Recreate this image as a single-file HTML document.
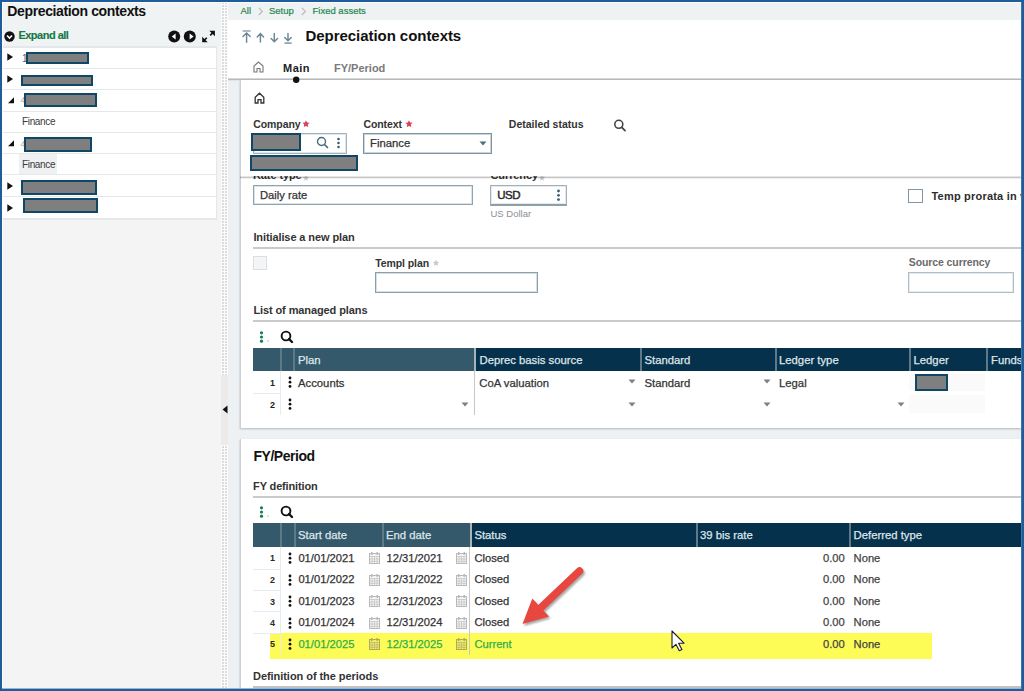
<!DOCTYPE html>
<html><head><meta charset="utf-8"><style>
html,body{margin:0;padding:0;}
body{width:1024px;height:691px;position:relative;overflow:hidden;background:#fff;font-family:"Liberation Sans",sans-serif;}
body>*{position:absolute;}
.t{white-space:nowrap;}
.d{-webkit-text-stroke:0.25px currentColor;}
svg{display:block;}
</style></head><body>
<div style="left:2px;top:2px;width:219px;height:687px;background:#f4f4f4;"></div>
<div style="left:2px;top:2px;width:219px;height:44px;background:#f0f3f4;"></div>
<span class="t" style="left:7.3px;top:4.25px;font-size:14px;line-height:14px;color:#111;font-weight:bold;letter-spacing:-0.37px;">Depreciation contexts</span>
<svg style="left:4px;top:31px" width="11" height="11" viewBox="0 0 11 11"><circle cx="5.5" cy="5.5" r="5.2" fill="#111"/><path d="M3 4.5 L5.5 7 L8 4.5" stroke="#fff" stroke-width="1.6" fill="none"/></svg>
<span class="t" style="left:18.4px;top:29.69px;font-size:11px;line-height:11px;color:#157a45;font-weight:bold;letter-spacing:-0.5px;-webkit-text-stroke:0.15px #157a45;">Expand all</span>
<svg style="left:160px;top:26px" width="60" height="20" viewBox="160 26 60 20"><circle cx="174.2" cy="36.6" r="6" fill="#111"/><path d="M171.8 36.6 L175.6 33.6 V39.6Z" fill="#fff"/><circle cx="189.8" cy="36.6" r="6" fill="#111"/><path d="M193.6 36.6 L189.6 33.6 V39.6Z" fill="#fff"/><path d="M209.3 30.7 H214.9 V36.3Z M202.2 36.8 V42.3 H207.7Z" fill="#111"/><path d="M213 32.6 L210.2 35.4 M203.9 40.6 L206.8 37.7" stroke="#111" stroke-width="1.6"/></svg>
<div style="left:2px;top:46px;width:215px;height:172px;background:#fff;border-right:1px solid #e3e7ea;box-sizing:border-box;"></div>
<div style="left:2px;top:46px;width:215px;height:2px;background:#e4e8eb;"></div>
<div style="left:2px;top:68px;width:215px;height:1px;background:#e4e8eb;"></div>
<div style="left:2px;top:89px;width:215px;height:1px;background:#e4e8eb;"></div>
<div style="left:2px;top:111px;width:215px;height:1px;background:#e4e8eb;"></div>
<div style="left:2px;top:132px;width:215px;height:1px;background:#e4e8eb;"></div>
<div style="left:2px;top:153px;width:215px;height:1px;background:#e4e8eb;"></div>
<div style="left:2px;top:174px;width:215px;height:1px;background:#e4e8eb;"></div>
<div style="left:2px;top:196px;width:215px;height:1px;background:#e4e8eb;"></div>
<div style="left:2px;top:218px;width:215px;height:2px;background:#e4e8eb;"></div>
<div style="left:19px;top:154px;width:38px;height:20px;background:#eef0f1;"></div>
<svg style="left:7.2px;top:53.2px" width="7" height="8" viewBox="0 0 7 8"><path d="M0.3 0.3 L6 4 L0.3 7.7Z" fill="#111"/></svg>
<svg style="left:7.2px;top:74.8px" width="7" height="8" viewBox="0 0 7 8"><path d="M0.3 0.3 L6 4 L0.3 7.7Z" fill="#111"/></svg>
<svg style="left:7.5px;top:97px" width="7" height="7" viewBox="0 0 7 7"><path d="M6 0.3 L6 6.3 L0 6.3Z" fill="#111"/></svg>
<svg style="left:7.5px;top:140.3px" width="7" height="7" viewBox="0 0 7 7"><path d="M6 0.3 L6 6.3 L0 6.3Z" fill="#111"/></svg>
<svg style="left:7.2px;top:182px" width="7" height="8" viewBox="0 0 7 8"><path d="M0.3 0.3 L6 4 L0.3 7.7Z" fill="#111"/></svg>
<svg style="left:7.2px;top:203.5px" width="7" height="8" viewBox="0 0 7 8"><path d="M0.3 0.3 L6 4 L0.3 7.7Z" fill="#111"/></svg>
<span class="t" style="left:22px;top:54.03px;font-size:10px;line-height:10px;color:#6a5a7a;">1</span>
<div style="left:26px;top:52px;width:63px;height:12px;background:#7f7f7f;border:2px solid #0e4866;box-sizing:border-box;"></div>
<div style="left:21px;top:75px;width:72px;height:11px;background:#7f7f7f;border:2px solid #0e4866;box-sizing:border-box;"></div>
<span class="t" style="left:20.5px;top:96.38px;font-size:9px;line-height:9px;color:#aaa;">4</span>
<div style="left:24px;top:93px;width:73px;height:14px;background:#7f7f7f;border:2px solid #0e4866;box-sizing:border-box;"></div>
<span class="t" style="left:22px;top:116.83px;font-size:10px;line-height:10px;color:#3a3a3a;letter-spacing:-0.35px;">Finance</span>
<span class="t" style="left:20.5px;top:139.88px;font-size:9px;line-height:9px;color:#aaa;">4</span>
<div style="left:24px;top:137px;width:68px;height:15px;background:#7f7f7f;border:2px solid #0e4866;box-sizing:border-box;"></div>
<span class="t" style="left:22px;top:159.53px;font-size:10px;line-height:10px;color:#3a3a3a;letter-spacing:-0.35px;">Finance</span>
<div style="left:21px;top:180px;width:76px;height:15px;background:#7f7f7f;border:2px solid #0e4866;box-sizing:border-box;"></div>
<div style="left:23px;top:198px;width:75px;height:15px;background:#7f7f7f;border:2px solid #0e4866;box-sizing:border-box;"></div>
<div style="left:221px;top:2px;width:7px;height:687px;background:#fcfcfc;"></div>
<div style="left:222px;top:2px;width:2px;height:687px;background:repeating-linear-gradient(to bottom,#dbdbdb 0,#dbdbdb 2px,#fcfcfc 2px,#fcfcfc 3px);"></div>
<div style="left:225px;top:2px;width:2px;height:687px;background:repeating-linear-gradient(to bottom,#dedede 0,#dedede 2px,#fcfcfc 2px,#fcfcfc 3px);"></div>
<div style="left:221px;top:375px;width:7px;height:70px;background:#ecebea;"></div>
<svg style="left:222px;top:405px" width="6" height="9" viewBox="0 0 6 9"><path d="M5.5 0.5 L0.5 4.5 L5.5 8.5Z" fill="#111"/></svg>
<div style="left:228px;top:2px;width:794px;height:687px;background:#eef1f3;"></div>
<div style="left:228px;top:2px;width:794px;height:18px;background:#eff2f3;"></div>
<span class="t" style="left:240.5px;top:6.46px;font-size:9.5px;line-height:9.5px;color:#1f8752;-webkit-text-stroke:0.2px #1f8752;">All</span>
<svg style="left:257.5px;top:6.5px" width="6" height="9" viewBox="0 0 6 9"><path d="M0.8 0.8 L4.3 4.4 L0.8 8" stroke="#b9b9bf" fill="none" stroke-width="1.2"/></svg>
<span class="t" style="left:269px;top:6.46px;font-size:9.5px;line-height:9.5px;color:#1f8752;-webkit-text-stroke:0.2px #1f8752;">Setup</span>
<svg style="left:300.8px;top:6.5px" width="6" height="9" viewBox="0 0 6 9"><path d="M0.8 0.8 L4.3 4.4 L0.8 8" stroke="#b9b9bf" fill="none" stroke-width="1.2"/></svg>
<span class="t" style="left:312.5px;top:6.46px;font-size:9.5px;line-height:9.5px;color:#1f8752;-webkit-text-stroke:0.2px #1f8752;">Fixed assets</span>
<div style="left:228px;top:20px;width:794px;height:59px;background:#fff;"></div>
<div style="left:228px;top:78px;width:794px;height:1px;background:#d6d7d8;"></div>
<div style="left:228px;top:79px;width:794px;height:1px;background:#b9babb;"></div>
<div style="left:228px;top:80px;width:794px;height:1px;background:#e2e3e4;"></div>
<svg style="left:236px;top:24px" width="64" height="24" viewBox="236 24 64 24" stroke="#6a8796" stroke-width="1.45" fill="none" stroke-linecap="round"><path d="M243.2 31 H250" stroke-width="1.6" stroke="#8ea6b1"/><path d="M246.6 33.3 V42.2 M243 36.6 L246.6 33 L250.2 36.6"/><path d="M260.4 33.6 V42 M257.2 36.9 L260.4 33.6 L263.6 36.9"/><path d="M274.3 33.4 V41.8 M271.1 38.5 L274.3 41.8 L277.5 38.5"/><path d="M288 33.4 V40.8 M284.8 37.6 L288 40.8 L291.2 37.6"/><path d="M285 43.1 H291.1" stroke-width="1.6" stroke="#8ea6b1"/></svg>
<span class="t" style="left:305.5px;top:28.30px;font-size:15px;line-height:15px;color:#111;font-weight:bold;letter-spacing:-0.05px;">Depreciation contexts</span>
<svg style="left:252.5px;top:61px" width="11" height="12" viewBox="0 0 11 12"><path d="M1 11 V5 L5.5 1 L10 5 V11 H7 V7.5 H4 V11Z" stroke="#777" stroke-width="1.1" fill="none"/></svg>
<span class="t" style="left:283px;top:62.69px;font-size:11px;line-height:11px;color:#222;font-weight:bold;letter-spacing:0.5px;">Main</span>
<span class="t" style="left:334px;top:62.69px;font-size:11px;line-height:11px;color:#7a7a7a;font-weight:bold;">FY/Period</span>
<div style="left:240px;top:80px;width:782px;height:348px;background:#fff;border-left:1px solid #cdd0d2;box-sizing:border-box;box-shadow:0 1px 2px rgba(0,0,0,0.25);"></div>
<span class="t" style="left:253px;top:170.09px;font-size:11px;line-height:11px;color:#333;font-weight:bold;letter-spacing:-0.1px;">Rate type</span>
<svg style="left:301px;top:172.5px" width="10" height="10" viewBox="301 172.5 10 10"><polygon points="306.00,174.20 306.97,176.17 309.14,176.48 307.57,178.01 307.94,180.17 306.00,179.15 304.06,180.17 304.43,178.01 302.86,176.48 305.03,176.17" fill="#cfcfcf"/></svg>
<span class="t" style="left:490.5px;top:170.09px;font-size:11px;line-height:11px;color:#333;font-weight:bold;letter-spacing:-0.1px;">Currency</span>
<svg style="left:536.5px;top:172.5px" width="10" height="10" viewBox="536.5 172.5 10 10"><polygon points="541.50,174.20 542.47,176.17 544.64,176.48 543.07,178.01 543.44,180.17 541.50,179.15 539.56,180.17 539.93,178.01 538.36,176.48 540.53,176.17" fill="#cfcfcf"/></svg>
<div style="left:253px;top:185px;width:220px;height:20px;border:1px solid #8fa4ae;box-shadow:inset 0 0 0 1px #dbe3e6;box-sizing:border-box;background:#fff;"></div>
<span class="t d" style="left:260px;top:189.72px;font-size:11.2px;line-height:11.2px;color:#333;">Daily rate</span>
<div style="left:490px;top:185px;width:77px;height:21px;border:1px solid #9fb1ba;border-bottom:2px solid #8ba0ab;box-shadow:inset 0 0 0 1px #e3e9ec;box-sizing:border-box;background:#fff;"></div>
<span class="t d" style="left:497.2px;top:189.67px;font-size:11.5px;line-height:11.5px;color:#2a2a2a;letter-spacing:-0.5px;-webkit-text-stroke:0.45px #2a2a2a;">USD</span>
<svg style="left:556px;top:189px" width="5" height="13" viewBox="0 0 5 13"><circle cx="2.5" cy="2" r="1.4" fill="#3d5f72"/><circle cx="2.5" cy="6.3" r="1.4" fill="#3d5f72"/><circle cx="2.5" cy="10.6" r="1.4" fill="#3d5f72"/></svg>
<span class="t" style="left:490.5px;top:209.16px;font-size:9.5px;line-height:9.5px;color:#8a8f92;">US Dollar</span>
<div style="left:908px;top:189px;width:15px;height:14px;border:1px solid #7e97a4;box-sizing:border-box;background:#fff;"></div>
<span class="t" style="left:931.5px;top:190.89px;font-size:11px;line-height:11px;color:#2d2d2d;font-weight:bold;letter-spacing:0.2px;">Temp prorata in v</span>
<span class="t" style="left:253.4px;top:231.59px;font-size:11px;line-height:11px;color:#333;font-weight:bold;letter-spacing:-0.1px;">Initialise a new plan</span>
<div style="left:253px;top:247px;width:769px;height:2px;background:#c9cacb;"></div>
<div style="left:253px;top:256px;width:14px;height:14px;border:1px solid #dcdfe1;box-sizing:border-box;background:#f4f5f6;"></div>
<span class="t" style="left:375.3px;top:257.61px;font-size:10.5px;line-height:10.5px;color:#333;font-weight:bold;letter-spacing:-0.1px;">Templ plan</span>
<svg style="left:431.4px;top:257.8px" width="10" height="10" viewBox="431.4 257.8 10 10"><polygon points="436.40,259.50 437.37,261.47 439.54,261.78 437.97,263.31 438.34,265.47 436.40,264.45 434.46,265.47 434.83,263.31 433.26,261.78 435.43,261.47" fill="#c9c9c9"/></svg>
<div style="left:375px;top:272px;width:163px;height:21px;border:1px solid #8aa0ab;box-shadow:inset 0 0 0 1px #d7dfe3;box-sizing:border-box;background:#fff;"></div>
<span class="t" style="left:908.8px;top:256.81px;font-size:10.5px;line-height:10.5px;color:#6a6a6a;font-weight:bold;letter-spacing:-0.1px;">Source currency</span>
<div style="left:908px;top:272px;width:106px;height:21px;border:1px solid #b0bec5;box-shadow:inset 0 0 0 1px #e6ebee;box-sizing:border-box;background:#fff;"></div>
<span class="t" style="left:253.4px;top:305.19px;font-size:11px;line-height:11px;color:#333;font-weight:bold;letter-spacing:-0.1px;">List of managed plans</span>
<div style="left:253px;top:320px;width:769px;height:2px;background:#c9cacb;"></div>
<svg style="left:258px;top:330px" width="12" height="14" viewBox="0 0 12 14"><circle cx="3.5" cy="2.8" r="1.6" fill="#0f7f55"/><circle cx="3.5" cy="7" r="1.6" fill="#0f7f55"/><circle cx="3.5" cy="11.2" r="1.6" fill="#0f7f55"/><circle cx="9.9" cy="11.1" r="0.7" fill="#7fb27f"/></svg>
<svg style="left:279px;top:329px" width="15" height="15" viewBox="0 0 15 15"><circle cx="7" cy="7" r="4.4" stroke="#111" stroke-width="1.9" fill="none"/><path d="M10 10 L13 13" stroke="#111" stroke-width="2.4" stroke-linecap="round"/></svg>
<div style="left:253px;top:348px;width:222px;height:23px;background:#34596b;"></div>
<div style="left:475px;top:348px;width:547px;height:23px;background:#06314c;"></div>
<div style="left:280px;top:348px;width:2px;height:23px;background:#5f7a86;"></div>
<div style="left:293px;top:348px;width:2px;height:23px;background:#5f7a86;"></div>
<div style="left:640px;top:348px;width:2px;height:23px;background:#5f7a86;"></div>
<div style="left:775px;top:348px;width:2px;height:23px;background:#5f7a86;"></div>
<div style="left:909px;top:348px;width:2px;height:23px;background:#5f7a86;"></div>
<div style="left:986px;top:348px;width:2px;height:23px;background:#5f7a86;"></div>
<div style="left:474px;top:348px;width:2px;height:23px;background:#aab4b4;"></div>
<span class="t d" style="left:298px;top:354.83px;font-size:11.3px;line-height:11.3px;color:#dfe6ea;">Plan</span>
<span class="t d" style="left:479.5px;top:354.83px;font-size:11.3px;line-height:11.3px;color:#dfe6ea;">Deprec basis source</span>
<span class="t d" style="left:644.5px;top:354.83px;font-size:11.3px;line-height:11.3px;color:#dfe6ea;">Standard</span>
<span class="t d" style="left:779px;top:354.83px;font-size:11.3px;line-height:11.3px;color:#dfe6ea;">Ledger type</span>
<span class="t d" style="left:913.5px;top:354.83px;font-size:11.3px;line-height:11.3px;color:#dfe6ea;">Ledger</span>
<span class="t d" style="left:991px;top:354.83px;font-size:11.3px;line-height:11.3px;color:#dfe6ea;">Funds</span>
<div style="left:280px;top:371px;width:1px;height:44px;background:#e9ecee;"></div>
<div style="left:253px;top:393px;width:28px;height:1px;background:#e9ecee;"></div>
<div style="left:474px;top:371px;width:1px;height:44px;background:#c6c9cb;"></div>
<span class="t" style="left:270px;top:378.88px;font-size:9px;line-height:9px;color:#222;font-weight:bold;">1</span>
<span class="t" style="left:270px;top:400.88px;font-size:9px;line-height:9px;color:#222;font-weight:bold;">2</span>
<svg style="left:288px;top:376px" width="4" height="13" viewBox="0 0 4 13"><circle cx="2" cy="2" r="1.4" fill="#111"/><circle cx="2" cy="6.2" r="1.4" fill="#111"/><circle cx="2" cy="10.4" r="1.4" fill="#111"/></svg>
<svg style="left:288px;top:398px" width="4" height="13" viewBox="0 0 4 13"><circle cx="2" cy="2" r="1.4" fill="#111"/><circle cx="2" cy="6.2" r="1.4" fill="#111"/><circle cx="2" cy="10.4" r="1.4" fill="#111"/></svg>
<span class="t d" style="left:298px;top:377.93px;font-size:11.3px;line-height:11.3px;color:#333;">Accounts</span>
<span class="t d" style="left:479.3px;top:377.93px;font-size:11.3px;line-height:11.3px;color:#333;">CoA valuation</span>
<span class="t d" style="left:644.5px;top:377.93px;font-size:11.3px;line-height:11.3px;color:#333;">Standard</span>
<span class="t d" style="left:779px;top:377.93px;font-size:11.3px;line-height:11.3px;color:#333;">Legal</span>
<svg style="left:628px;top:379px" width="8" height="5" viewBox="0 0 8 5"><path d="M0.5 0.5 H7.5 L4 4.5Z" fill="#7b8186"/></svg>
<svg style="left:763px;top:379px" width="8" height="5" viewBox="0 0 8 5"><path d="M0.5 0.5 H7.5 L4 4.5Z" fill="#7b8186"/></svg>
<svg style="left:461px;top:402px" width="8" height="5" viewBox="0 0 8 5"><path d="M0.5 0.5 H7.5 L4 4.5Z" fill="#7b8186"/></svg>
<svg style="left:628px;top:402px" width="8" height="5" viewBox="0 0 8 5"><path d="M0.5 0.5 H7.5 L4 4.5Z" fill="#7b8186"/></svg>
<svg style="left:763px;top:402px" width="8" height="5" viewBox="0 0 8 5"><path d="M0.5 0.5 H7.5 L4 4.5Z" fill="#7b8186"/></svg>
<svg style="left:897px;top:402px" width="8" height="5" viewBox="0 0 8 5"><path d="M0.5 0.5 H7.5 L4 4.5Z" fill="#7b8186"/></svg>
<div style="left:909px;top:374px;width:76px;height:17px;background:#fafafa;"></div>
<div style="left:909px;top:395px;width:76px;height:18px;background:#fafafa;"></div>
<div style="left:915px;top:374px;width:33px;height:17px;background:#7f7f7f;border:2px solid #0e4866;box-sizing:border-box;"></div>
<div style="left:240px;top:80px;width:782px;height:96px;background:#fff;border-left:1px solid #cdd0d2;box-sizing:border-box;"></div>
<div style="left:240px;top:176px;width:782px;height:1px;background:rgba(0,0,0,0.1);"></div>
<div style="left:240px;top:177px;width:782px;height:1px;background:rgba(0,0,0,0.22);"></div>
<div style="left:240px;top:178px;width:782px;height:1px;background:rgba(0,0,0,0.06);"></div>
<svg style="left:253.5px;top:91.5px" width="11" height="12" viewBox="0 0 11 12"><path d="M1.2 11 V5.2 L5.5 1.2 L9.8 5.2 V11 H7 V7.6 H4 V11Z" stroke="#333" stroke-width="1.3" fill="none"/></svg>
<span class="t" style="left:253.3px;top:118.71px;font-size:10.5px;line-height:10.5px;color:#333;font-weight:bold;letter-spacing:-0.1px;">Company</span>
<svg style="left:301.2px;top:118.9px" width="10" height="10" viewBox="301.2 118.9 10 10"><polygon points="306.20,120.10 307.32,122.36 309.81,122.73 308.01,124.49 308.43,126.97 306.20,125.80 303.97,126.97 304.39,124.49 302.59,122.73 305.08,122.36" fill="#d8425a"/></svg>
<div style="left:253px;top:133px;width:94px;height:21px;border:1px solid #a0b2ba;box-shadow:inset 0 0 0 1px #e0e7ea;box-sizing:border-box;background:#fff;"></div>
<svg style="left:316px;top:136px" width="13" height="13" viewBox="0 0 13 13"><circle cx="5.5" cy="5.5" r="4" stroke="#4a6b7c" stroke-width="1.4" fill="none"/><path d="M8.5 8.5 L11.5 11.5" stroke="#4a6b7c" stroke-width="1.7" stroke-linecap="round"/></svg>
<svg style="left:336px;top:137px" width="5" height="13" viewBox="0 0 5 13"><circle cx="2.5" cy="2" r="1.3" fill="#3d5f72"/><circle cx="2.5" cy="6" r="1.3" fill="#3d5f72"/><circle cx="2.5" cy="10" r="1.3" fill="#3d5f72"/></svg>
<div style="left:251px;top:133px;width:50px;height:18px;background:#7f7f7f;border:2px solid #0e4866;box-sizing:border-box;"></div>
<div style="left:250px;top:155px;width:108px;height:16px;background:#7f7f7f;border:2px solid #0e4866;box-sizing:border-box;"></div>
<span class="t" style="left:363.5px;top:118.71px;font-size:10.5px;line-height:10.5px;color:#333;font-weight:bold;letter-spacing:-0.1px;">Context</span>
<svg style="left:403.8px;top:118.9px" width="10" height="10" viewBox="403.8 118.9 10 10"><polygon points="408.80,120.10 409.92,122.36 412.41,122.73 410.61,124.49 411.03,126.97 408.80,125.80 406.57,126.97 406.99,124.49 405.19,122.73 407.68,122.36" fill="#d8425a"/></svg>
<div style="left:363px;top:133px;width:129px;height:21px;border:1px solid #7b95a3;box-shadow:inset 0 0 0 1px #c9d5db;box-sizing:border-box;background:#fff;"></div>
<span class="t d" style="left:370px;top:138.13px;font-size:11.3px;line-height:11.3px;color:#333;">Finance</span>
<svg style="left:479px;top:141px" width="8" height="5" viewBox="0 0 8 5"><path d="M0.5 0.5 H7.5 L4 4.5Z" fill="#4f6f80"/></svg>
<span class="t" style="left:508.8px;top:118.71px;font-size:10.5px;line-height:10.5px;color:#333;font-weight:bold;">Detailed status</span>
<svg style="left:612px;top:118px" width="15" height="15" viewBox="0 0 15 15"><circle cx="6.8" cy="6.3" r="4" stroke="#444" stroke-width="1.6" fill="none"/><path d="M9.8 9.3 L13 12.6" stroke="#444" stroke-width="1.8" stroke-linecap="round"/></svg>
<div style="left:240px;top:439px;width:782px;height:250px;background:#fff;border-left:1px solid #cdd0d2;box-sizing:border-box;box-shadow:0 1px 2px rgba(0,0,0,0.25);"></div>
<span class="t" style="left:253.4px;top:448.65px;font-size:14px;line-height:14px;color:#111;font-weight:bold;letter-spacing:-0.45px;">FY/Period</span>
<span class="t" style="left:253.1px;top:480.89px;font-size:11px;line-height:11px;color:#333;font-weight:bold;letter-spacing:-0.15px;">FY definition</span>
<div style="left:253px;top:496px;width:769px;height:2px;background:#c9cacb;"></div>
<svg style="left:258px;top:505px" width="12" height="14" viewBox="0 0 12 14"><circle cx="3.5" cy="2.8" r="1.6" fill="#0f7f55"/><circle cx="3.5" cy="7" r="1.6" fill="#0f7f55"/><circle cx="3.5" cy="11.2" r="1.6" fill="#0f7f55"/><circle cx="9.9" cy="11.1" r="0.7" fill="#7fb27f"/></svg>
<svg style="left:279px;top:504px" width="15" height="15" viewBox="0 0 15 15"><circle cx="7" cy="7" r="4.4" stroke="#111" stroke-width="1.9" fill="none"/><path d="M10 10 L13 13" stroke="#111" stroke-width="2.4" stroke-linecap="round"/></svg>
<div style="left:253px;top:523px;width:217px;height:24px;background:#34596b;"></div>
<div style="left:470px;top:523px;width:552px;height:24px;background:#06314c;"></div>
<div style="left:280px;top:523px;width:2px;height:24px;background:#5f7a86;"></div>
<div style="left:293.5px;top:523px;width:2.0px;height:24px;background:#5f7a86;"></div>
<div style="left:382px;top:523px;width:2px;height:24px;background:#5f7a86;"></div>
<div style="left:696px;top:523px;width:2px;height:24px;background:#5f7a86;"></div>
<div style="left:849px;top:523px;width:2px;height:24px;background:#5f7a86;"></div>
<div style="left:470px;top:523px;width:2px;height:24px;background:#aab4b4;"></div>
<span class="t d" style="left:298px;top:530.03px;font-size:11.3px;line-height:11.3px;color:#dfe6ea;">Start date</span>
<span class="t d" style="left:386px;top:530.03px;font-size:11.3px;line-height:11.3px;color:#dfe6ea;">End date</span>
<span class="t d" style="left:474.4px;top:530.03px;font-size:11.3px;line-height:11.3px;color:#dfe6ea;">Status</span>
<span class="t d" style="left:700px;top:530.03px;font-size:11.3px;line-height:11.3px;color:#dfe6ea;">39 bis rate</span>
<span class="t d" style="left:853.6px;top:530.03px;font-size:11.3px;line-height:11.3px;color:#dfe6ea;">Deferred type</span>
<div style="left:270px;top:633px;width:662px;height:26px;background:#fdfc57;"></div>
<div style="left:280px;top:547px;width:1px;height:108px;background:#e9ecee;"></div>
<div style="left:253px;top:569px;width:28px;height:1px;background:#e9ecee;"></div>
<div style="left:253px;top:590px;width:28px;height:1px;background:#e9ecee;"></div>
<div style="left:253px;top:611px;width:28px;height:1px;background:#e9ecee;"></div>
<div style="left:253px;top:633px;width:28px;height:1px;background:#e9ecee;"></div>
<div style="left:469px;top:547px;width:1px;height:108px;background:#c6c9cb;"></div>
<span class="t" style="left:270px;top:554.38px;font-size:9px;line-height:9px;color:#2a2a2a;font-weight:bold;">1</span>
<svg style="left:288px;top:552px" width="4" height="13" viewBox="0 0 4 13"><circle cx="2" cy="2" r="1.4" fill="#111"/><circle cx="2" cy="6.2" r="1.4" fill="#111"/><circle cx="2" cy="10.4" r="1.4" fill="#111"/></svg>
<span class="t d" style="left:298.4px;top:552.52px;font-size:11.2px;line-height:11.2px;color:#333;">01/01/2021</span>
<svg style="left:368.8px;top:552.2px" width="11" height="12" viewBox="0 0 11 12"><rect x="0.5" y="1.5" width="10" height="10" fill="#f4f4f4" stroke="#b9b9b9" stroke-width="1"/><path d="M0.5 4.5 H10.5 M0.5 7 H10.5 M0.5 9.3 H10.5 M3 4.5 V11.5 M5.5 4.5 V11.5 M8 4.5 V11.5" stroke="#b9b9b9" stroke-width="0.6"/><rect x="2" y="0" width="1.5" height="3" fill="#b9b9b9"/><rect x="7.5" y="0" width="1.5" height="3" fill="#b9b9b9"/></svg>
<span class="t d" style="left:386.5px;top:552.52px;font-size:11.2px;line-height:11.2px;color:#333;">12/31/2021</span>
<svg style="left:456px;top:552.2px" width="11" height="12" viewBox="0 0 11 12"><rect x="0.5" y="1.5" width="10" height="10" fill="#f4f4f4" stroke="#b9b9b9" stroke-width="1"/><path d="M0.5 4.5 H10.5 M0.5 7 H10.5 M0.5 9.3 H10.5 M3 4.5 V11.5 M5.5 4.5 V11.5 M8 4.5 V11.5" stroke="#b9b9b9" stroke-width="0.6"/><rect x="2" y="0" width="1.5" height="3" fill="#b9b9b9"/><rect x="7.5" y="0" width="1.5" height="3" fill="#b9b9b9"/></svg>
<span class="t d" style="left:474.4px;top:552.52px;font-size:11.2px;line-height:11.2px;color:#333;">Closed</span>
<span class="t d" style="right:179.20000000000005px;top:552.52px;font-size:11.2px;line-height:11.2px;color:#444;">0.00</span>
<span class="t d" style="left:853.6px;top:552.52px;font-size:11.2px;line-height:11.2px;color:#444;">None</span>
<span class="t" style="left:270px;top:576.18px;font-size:9px;line-height:9px;color:#2a2a2a;font-weight:bold;">2</span>
<svg style="left:288px;top:574px" width="4" height="13" viewBox="0 0 4 13"><circle cx="2" cy="2" r="1.4" fill="#111"/><circle cx="2" cy="6.2" r="1.4" fill="#111"/><circle cx="2" cy="10.4" r="1.4" fill="#111"/></svg>
<span class="t d" style="left:298.4px;top:574.32px;font-size:11.2px;line-height:11.2px;color:#333;">01/01/2022</span>
<svg style="left:368.8px;top:574.0px" width="11" height="12" viewBox="0 0 11 12"><rect x="0.5" y="1.5" width="10" height="10" fill="#f4f4f4" stroke="#b9b9b9" stroke-width="1"/><path d="M0.5 4.5 H10.5 M0.5 7 H10.5 M0.5 9.3 H10.5 M3 4.5 V11.5 M5.5 4.5 V11.5 M8 4.5 V11.5" stroke="#b9b9b9" stroke-width="0.6"/><rect x="2" y="0" width="1.5" height="3" fill="#b9b9b9"/><rect x="7.5" y="0" width="1.5" height="3" fill="#b9b9b9"/></svg>
<span class="t d" style="left:386.5px;top:574.32px;font-size:11.2px;line-height:11.2px;color:#333;">12/31/2022</span>
<svg style="left:456px;top:574.0px" width="11" height="12" viewBox="0 0 11 12"><rect x="0.5" y="1.5" width="10" height="10" fill="#f4f4f4" stroke="#b9b9b9" stroke-width="1"/><path d="M0.5 4.5 H10.5 M0.5 7 H10.5 M0.5 9.3 H10.5 M3 4.5 V11.5 M5.5 4.5 V11.5 M8 4.5 V11.5" stroke="#b9b9b9" stroke-width="0.6"/><rect x="2" y="0" width="1.5" height="3" fill="#b9b9b9"/><rect x="7.5" y="0" width="1.5" height="3" fill="#b9b9b9"/></svg>
<span class="t d" style="left:474.4px;top:574.32px;font-size:11.2px;line-height:11.2px;color:#333;">Closed</span>
<span class="t d" style="right:179.20000000000005px;top:574.32px;font-size:11.2px;line-height:11.2px;color:#444;">0.00</span>
<span class="t d" style="left:853.6px;top:574.32px;font-size:11.2px;line-height:11.2px;color:#444;">None</span>
<span class="t" style="left:270px;top:597.58px;font-size:9px;line-height:9px;color:#2a2a2a;font-weight:bold;">3</span>
<svg style="left:288px;top:595px" width="4" height="13" viewBox="0 0 4 13"><circle cx="2" cy="2" r="1.4" fill="#111"/><circle cx="2" cy="6.2" r="1.4" fill="#111"/><circle cx="2" cy="10.4" r="1.4" fill="#111"/></svg>
<span class="t d" style="left:298.4px;top:595.72px;font-size:11.2px;line-height:11.2px;color:#333;">01/01/2023</span>
<svg style="left:368.8px;top:595.4000000000001px" width="11" height="12" viewBox="0 0 11 12"><rect x="0.5" y="1.5" width="10" height="10" fill="#f4f4f4" stroke="#b9b9b9" stroke-width="1"/><path d="M0.5 4.5 H10.5 M0.5 7 H10.5 M0.5 9.3 H10.5 M3 4.5 V11.5 M5.5 4.5 V11.5 M8 4.5 V11.5" stroke="#b9b9b9" stroke-width="0.6"/><rect x="2" y="0" width="1.5" height="3" fill="#b9b9b9"/><rect x="7.5" y="0" width="1.5" height="3" fill="#b9b9b9"/></svg>
<span class="t d" style="left:386.5px;top:595.72px;font-size:11.2px;line-height:11.2px;color:#333;">12/31/2023</span>
<svg style="left:456px;top:595.4000000000001px" width="11" height="12" viewBox="0 0 11 12"><rect x="0.5" y="1.5" width="10" height="10" fill="#f4f4f4" stroke="#b9b9b9" stroke-width="1"/><path d="M0.5 4.5 H10.5 M0.5 7 H10.5 M0.5 9.3 H10.5 M3 4.5 V11.5 M5.5 4.5 V11.5 M8 4.5 V11.5" stroke="#b9b9b9" stroke-width="0.6"/><rect x="2" y="0" width="1.5" height="3" fill="#b9b9b9"/><rect x="7.5" y="0" width="1.5" height="3" fill="#b9b9b9"/></svg>
<span class="t d" style="left:474.4px;top:595.72px;font-size:11.2px;line-height:11.2px;color:#333;">Closed</span>
<span class="t d" style="right:179.20000000000005px;top:595.72px;font-size:11.2px;line-height:11.2px;color:#444;">0.00</span>
<span class="t d" style="left:853.6px;top:595.72px;font-size:11.2px;line-height:11.2px;color:#444;">None</span>
<span class="t" style="left:270px;top:618.98px;font-size:9px;line-height:9px;color:#2a2a2a;font-weight:bold;">4</span>
<svg style="left:288px;top:617px" width="4" height="13" viewBox="0 0 4 13"><circle cx="2" cy="2" r="1.4" fill="#111"/><circle cx="2" cy="6.2" r="1.4" fill="#111"/><circle cx="2" cy="10.4" r="1.4" fill="#111"/></svg>
<span class="t d" style="left:298.4px;top:617.12px;font-size:11.2px;line-height:11.2px;color:#333;">01/01/2024</span>
<svg style="left:368.8px;top:616.8000000000001px" width="11" height="12" viewBox="0 0 11 12"><rect x="0.5" y="1.5" width="10" height="10" fill="#f4f4f4" stroke="#b9b9b9" stroke-width="1"/><path d="M0.5 4.5 H10.5 M0.5 7 H10.5 M0.5 9.3 H10.5 M3 4.5 V11.5 M5.5 4.5 V11.5 M8 4.5 V11.5" stroke="#b9b9b9" stroke-width="0.6"/><rect x="2" y="0" width="1.5" height="3" fill="#b9b9b9"/><rect x="7.5" y="0" width="1.5" height="3" fill="#b9b9b9"/></svg>
<span class="t d" style="left:386.5px;top:617.12px;font-size:11.2px;line-height:11.2px;color:#333;">12/31/2024</span>
<svg style="left:456px;top:616.8000000000001px" width="11" height="12" viewBox="0 0 11 12"><rect x="0.5" y="1.5" width="10" height="10" fill="#f4f4f4" stroke="#b9b9b9" stroke-width="1"/><path d="M0.5 4.5 H10.5 M0.5 7 H10.5 M0.5 9.3 H10.5 M3 4.5 V11.5 M5.5 4.5 V11.5 M8 4.5 V11.5" stroke="#b9b9b9" stroke-width="0.6"/><rect x="2" y="0" width="1.5" height="3" fill="#b9b9b9"/><rect x="7.5" y="0" width="1.5" height="3" fill="#b9b9b9"/></svg>
<span class="t d" style="left:474.4px;top:617.12px;font-size:11.2px;line-height:11.2px;color:#333;">Closed</span>
<span class="t d" style="right:179.20000000000005px;top:617.12px;font-size:11.2px;line-height:11.2px;color:#444;">0.00</span>
<span class="t d" style="left:853.6px;top:617.12px;font-size:11.2px;line-height:11.2px;color:#444;">None</span>
<span class="t" style="left:270px;top:640.38px;font-size:9px;line-height:9px;color:#2a2a2a;font-weight:bold;">5</span>
<svg style="left:288px;top:638px" width="4" height="13" viewBox="0 0 4 13"><circle cx="2" cy="2" r="1.4" fill="#111"/><circle cx="2" cy="6.2" r="1.4" fill="#111"/><circle cx="2" cy="10.4" r="1.4" fill="#111"/></svg>
<span class="t d" style="left:298.4px;top:638.52px;font-size:11.2px;line-height:11.2px;color:#2fae49;">01/01/2025</span>
<svg style="left:368.8px;top:638.2px" width="11" height="12" viewBox="0 0 11 12"><rect x="0.5" y="1.5" width="10" height="10" fill="#f0ec70" stroke="#b0ab5a" stroke-width="1"/><path d="M0.5 4.5 H10.5 M0.5 7 H10.5 M0.5 9.3 H10.5 M3 4.5 V11.5 M5.5 4.5 V11.5 M8 4.5 V11.5" stroke="#b0ab5a" stroke-width="0.6"/><rect x="2" y="0" width="1.5" height="3" fill="#b0ab5a"/><rect x="7.5" y="0" width="1.5" height="3" fill="#b0ab5a"/></svg>
<span class="t d" style="left:386.5px;top:638.52px;font-size:11.2px;line-height:11.2px;color:#2fae49;">12/31/2025</span>
<svg style="left:456px;top:638.2px" width="11" height="12" viewBox="0 0 11 12"><rect x="0.5" y="1.5" width="10" height="10" fill="#f0ec70" stroke="#b0ab5a" stroke-width="1"/><path d="M0.5 4.5 H10.5 M0.5 7 H10.5 M0.5 9.3 H10.5 M3 4.5 V11.5 M5.5 4.5 V11.5 M8 4.5 V11.5" stroke="#b0ab5a" stroke-width="0.6"/><rect x="2" y="0" width="1.5" height="3" fill="#b0ab5a"/><rect x="7.5" y="0" width="1.5" height="3" fill="#b0ab5a"/></svg>
<span class="t d" style="left:474.4px;top:638.52px;font-size:11.2px;line-height:11.2px;color:#2fae49;">Current</span>
<span class="t d" style="right:179.20000000000005px;top:638.52px;font-size:11.2px;line-height:11.2px;color:#444;">0.00</span>
<span class="t d" style="left:853.6px;top:638.52px;font-size:11.2px;line-height:11.2px;color:#444;">None</span>
<span class="t" style="left:253px;top:670.69px;font-size:11px;line-height:11px;color:#333;font-weight:bold;letter-spacing:-0.05px;">Definition of the periods</span>
<div style="left:253px;top:686px;width:769px;height:2px;background:#c2c2c2;"></div>
<svg style="left:510px;top:560px" width="80" height="75" viewBox="510 560 80 75"><defs><filter id="sh" x="-20%" y="-20%" width="140%" height="140%"><feGaussianBlur stdDeviation="1.2"/></filter></defs><g transform="translate(1.5,2)" opacity="0.35" filter="url(#sh)"><path d="M579.5 571 L541 607.5" stroke="#000" stroke-width="7.5" stroke-linecap="round"/><path d="M522.5 624 L532.3 598.5 L549 616.5Z" fill="#000"/></g><path d="M579.5 571 L541 607.5" stroke="#e8473f" stroke-width="7.5" stroke-linecap="round"/><path d="M522.5 624 L532.3 598.5 L549 616.5Z" fill="#e8473f"/></svg>
<svg style="left:665px;top:625px" width="25" height="30" viewBox="665 625 25 30"><path d="M672 631 V648 L675.9 644.3 L679.3 650.8 L681.9 649.6 L678.6 643.2 L684 643.2Z" fill="#fff" stroke="#1a1a2a" stroke-width="1.1" stroke-linejoin="round"/></svg>
<svg style="left:292px;top:75px" width="9" height="9" viewBox="0 0 9 9"><circle cx="4.2" cy="4.7" r="3.2" fill="#111"/></svg>
<div style="left:2px;top:2px;width:1019px;height:1px;background:#fbfcfc;"></div>
<div style="left:2px;top:2px;width:1px;height:686px;background:#fbfcfc;"></div>
<div style="left:0px;top:0px;width:1024px;height:2px;background:#1f5c9b;"></div>
<div style="left:0px;top:689px;width:1024px;height:2px;background:#1f5c9b;"></div>
<div style="left:2px;top:688px;width:1019px;height:1px;background:#9db5cf;"></div>
<div style="left:0px;top:0px;width:2px;height:691px;background:#1f5c9b;"></div>
<div style="left:1022px;top:0px;width:2px;height:691px;background:#1f5c9b;"></div>
<div style="left:1021px;top:2px;width:1px;height:687px;background:#3f74ab;"></div>
</body></html>
